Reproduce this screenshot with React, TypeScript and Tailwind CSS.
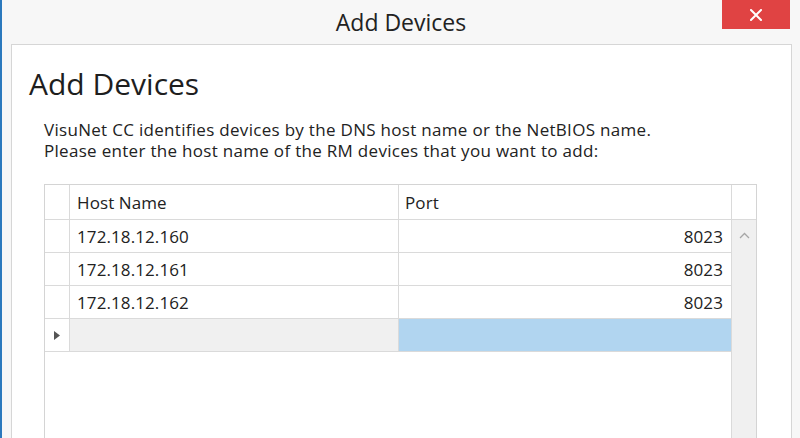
import React from "react";

const rows = [
  { host: "172.18.12.160", port: "8023" },
  { host: "172.18.12.161", port: "8023" },
  { host: "172.18.12.162", port: "8023" },
];

export default function App() {
  return (
    <div
      className="relative w-[800px] h-[438px] overflow-hidden bg-[#f7f7f7] border-l-2 border-[#2b79bd] flex flex-col text-[#1b1b1b]"
      style={{ fontFamily: '"Open Sans", "Noto Sans", sans-serif' }}
    >
      {/* Title bar */}
      <div className="h-[44px] shrink-0 flex items-center justify-center">
        <span className="text-[23px] leading-[28px] text-[#222]">Add Devices</span>
      </div>
      <button className="absolute top-0 right-[10px] w-[68px] h-[29px] bg-[#e04343] flex items-center justify-center">
        <svg width="12" height="12" viewBox="0 0 12 12">
          <path d="M1 1 L11 11 M11 1 L1 11" stroke="#fff" strokeWidth="2" strokeLinecap="square" />
        </svg>
      </button>

      {/* Panel */}
      <div className="flex-1 ml-[9px] mr-[8px] bg-white border border-b-0 border-[#d6d6d6] flex flex-col">
        <h1 className="mt-[21px] ml-[17px] text-[30px] leading-[36px] text-[#1e1e1e]">Add Devices</h1>
        <div className="mt-[17px] ml-[32px] text-[17px] leading-[21px] tracking-[0.3px] text-[#222]">
          <p>VisuNet CC identifies devices by the DNS host name or the NetBIOS name.</p>
          <p>Please enter the host name of the RM devices that you want to add:</p>
        </div>

        {/* Grid */}
        <div className="mt-[23px] ml-[32px] w-[713px] flex-1 border border-b-0 border-[#d4d4d4] flex text-[17px] tracking-[0.1px] text-[#222]">
          <div className="flex flex-col w-[686px]">
            {/* Header */}
            <div className="flex h-[35px] border-b border-[#dadada]">
              <div className="w-[25px] border-r border-[#dadada]" />
              <div className="w-[329px] border-r border-[#dadada] flex items-center pl-[7px] pt-[2px]">Host Name</div>
              <div className="flex-1 flex items-center pl-[6px] pt-[2px]">Port</div>
            </div>
            {rows.map((r) => (
              <div key={r.host} className="flex h-[33px] border-b border-[#dadada]">
                <div className="w-[25px] border-r border-[#dadada]" />
                <div className="w-[329px] border-r border-[#dadada] flex items-center pl-[7px] pt-[2px]">{r.host}</div>
                <div className="flex-1 flex items-center justify-end pr-[8px] pt-[2px]">{r.port}</div>
              </div>
            ))}
            {/* New row */}
            <div className="flex h-[33px] border-b border-[#dadada]">
              <div className="w-[25px] border-r border-[#dadada] flex items-center justify-center">
                <svg width="6" height="9" viewBox="0 0 6 9">
                  <path d="M0 0 L6 4.5 L0 9 Z" fill="#555" />
                </svg>
              </div>
              <div className="w-[329px] bg-[#f0f0f0] border-r border-[#dadada]" />
              <div className="flex-1 bg-[#b1d5f0]" />
            </div>
            <div className="flex-1" />
          </div>
          {/* Scroll column */}
          <div className="flex-1 flex flex-col border-l border-[#dadada]">
            <div className="h-[35px] bg-white border-b border-[#dadada]" />
            <div className="flex-1 bg-[#f0f0f0] flex flex-col items-center pt-[12px]">
              <svg width="11" height="7" viewBox="0 0 11 7">
                <path d="M1 6 L5.5 1.5 L10 6" stroke="#a6a6a6" strokeWidth="1.3" fill="none" />
              </svg>
            </div>
          </div>
        </div>
      </div>
    </div>
  );
}
